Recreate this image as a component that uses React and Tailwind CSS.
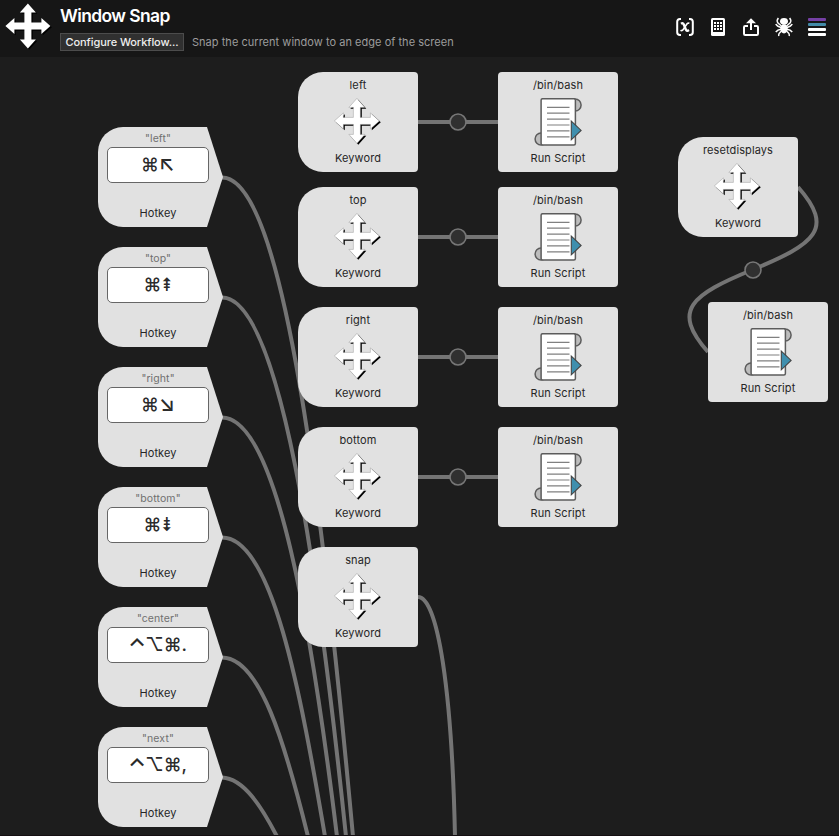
import React from "react";

const ARROWS =
  "M22.5 0 L30.5 9 L26 9 L26 19 L36 19 L36 14.5 L45 22.5 L36 30.5 L36 26 L26 26 L26 36 L30.5 36 L22.5 45 L14.5 36 L19 36 L19 26 L9 26 L9 30.5 L0 22.5 L9 14.5 L9 19 L19 19 L19 9 L14.5 9 Z";

function MoveIcon({ className, outlined }) {
  return (
    <svg className={className} viewBox="0 0 48 48" fill="none">
      <path d={ARROWS} transform="translate(1.8 1.8)" fill="#000" />
      <path
        d={ARROWS}
        transform="translate(0.4 0.4)"
        fill="#fff"
        stroke={outlined ? "#8a8a8a" : "none"}
        strokeWidth="0.4"
      />
    </svg>
  );
}

function ScriptIcon() {
  return (
    <svg className="h-12 w-12" viewBox="0 0 48 48" fill="none">
      <g stroke="#5c5c5c" strokeWidth="1.5">
        <circle cx="41.2" cy="7" r="5.9" fill="#bdbdbd" />
        <circle cx="7" cy="41" r="5.9" fill="#bdbdbd" />
        <rect x="7.1" y="0.7" width="34.3" height="46.2" rx="1.5" fill="#fff" />
      </g>
      <path
        d="M13 9.3H35.5M13 15.2H35.5M13 21.1H35.5M13 27H35.5M13 32.9H35.5M13 38.8H35.5"
        stroke="#808080"
        strokeWidth="1.2"
      />
      <path d="M37.3 23.1L47.1 32.4L37.3 41.8Z" fill="#3f8fae" stroke="#444" strokeWidth="1.1" />
    </svg>
  );
}

function Keyword({ title, className }) {
  return (
    <div
      className={`absolute flex h-[100px] w-[120px] flex-col items-center rounded-l-[25px] rounded-r-[4px] bg-[#e1e1e1] pt-[6px] text-[11px] leading-[14px] tracking-[0.1px] text-[#262626] ${className}`}
    >
      <span>{title}</span>
      <MoveIcon outlined className="mt-[6px] h-[48px] w-[48px]" />
      <span className="mt-[5px]">Keyword</span>
    </div>
  );
}

function RunScript({ className }) {
  return (
    <div
      className={`absolute flex h-[100px] w-[120px] flex-col items-center rounded-[4px] bg-[#e1e1e1] pt-[6px] text-[11px] leading-[14px] tracking-[0.1px] text-[#262626] ${className}`}
    >
      <span>/bin/bash</span>
      <div className="mt-[6px] mr-px">
        <ScriptIcon />
      </div>
      <span className="mt-[5px]">Run Script</span>
    </div>
  );
}

function Hotkey({ title, keys, arrow, control, className }) {
  return (
    <div className={`absolute h-[100px] w-[125px] ${className}`}>
      <div className="flex h-full flex-col items-start rounded-l-[25px] bg-[#e1e1e1] pt-[5px] text-[11px] leading-[14px] tracking-[0.1px] text-[#262626] [clip-path:polygon(0_0,109px_0,125px_50%,109px_100%,0_100%)]">
        <span className="w-[120px] text-center text-[10.5px] text-[#707070]">&quot;{title}&quot;</span>
        <div className="mt-px ml-[9px] flex h-[36px] w-[102px] items-center justify-center rounded-[5px] border border-[#666] bg-white text-[18px] leading-none font-medium tracking-normal text-[#2b2b2b]">
          {control && <span className="mt-[4px] -mr-px -ml-px text-[23px]">⌃</span>}
          <span>{keys}</span>
          {arrow && <span className="mb-[3px] text-[21px]">{arrow}</span>}
        </div>
        <span className="mt-[23px] w-[120px] text-center">Hotkey</span>
      </div>
    </div>
  );
}

const hotkeys = [
  { title: "left", keys: "⌘", arrow: "↖", className: "left-[98px] top-[127px]" },
  { title: "top", keys: "⌘⇞", className: "left-[98px] top-[247px]" },
  { title: "right", keys: "⌘", arrow: "↘", className: "left-[98px] top-[367px]" },
  { title: "bottom", keys: "⌘⇟", className: "left-[98px] top-[487px]" },
  { title: "center", control: true, keys: "⌥⌘.", className: "left-[98px] top-[607px]" },
  { title: "next", control: true, keys: "⌥⌘,", className: "left-[98px] top-[727px]" },
];

const keywords = [
  { title: "left", className: "left-[298px] top-[72px]" },
  { title: "top", className: "left-[298px] top-[187px]" },
  { title: "right", className: "left-[298px] top-[307px]" },
  { title: "bottom", className: "left-[298px] top-[427px]" },
  { title: "snap", className: "left-[298px] top-[547px]" },
  { title: "resetdisplays", className: "left-[678px] top-[137px]" },
];

const scripts = [
  "left-[498px] top-[72px]",
  "left-[498px] top-[187px]",
  "left-[498px] top-[307px]",
  "left-[498px] top-[427px]",
  "left-[708px] top-[302px]",
];

const wires = [
  "M222 177.5c62 0 101 330 131 659",
  "M222 297.5c58 0 96 270 124 539",
  "M222 417.5c55 0 90 214 115 419",
  "M222 537.5c50 0 78 152 103 299",
  "M222 657.5c38 0 63 86 86 179",
  "M222 777.5c22 1 40 30 55 59",
  "M418 597c20 0 34 95 37 240",
  "M418 122H498",
  "M418 237H498",
  "M418 357H498",
  "M418 477H498",
  "M798 187C835 229 815 244 753 269.5C691 295 671 310 708 352",
];

const joints = [
  [458, 122],
  [458, 237],
  [458, 357],
  [458, 477],
  [753, 270],
];

function HeaderIcons() {
  return (
    <div className="absolute top-[17px] left-[675px] flex items-center gap-[13px]">
      <svg className="h-5 w-5" viewBox="0 0 20 20" fill="none" stroke="#fff" strokeWidth="2">
        <path d="M6 2H5Q2.2 2 2.2 4.8V15.2Q2.2 18 5 18H6M14 2H15Q17.8 2 17.8 4.8V15.2Q17.8 18 15 18H14" />
        <path d="M6 6.8Q8.2 5.3 8.9 7.8L10.8 12.4Q11.6 14.7 14 13" strokeWidth="2.4" />
        <path d="M14.4 6.4Q12.8 5.4 11.2 8L8.6 12Q7.2 14.4 5.4 13.4" strokeWidth="1.6" />
      </svg>
      <svg className="h-5 w-5" viewBox="0 0 20 20">
        <rect x="3" y="1" width="14" height="18" rx="1.6" fill="#fff" />
        <rect x="5" y="3" width="10" height="12" fill="#161616" />
        <path
          d="M6 5h2v2h-2zM9 5h2v2h-2zM12 5h2v2h-2zM6 8h2v2h-2zM9 8h2v2h-2zM12 8h2v2h-2zM6 11h2v2h-2zM9 11h2v2h-2zM12 11h2v2h-2z"
          fill="#fff"
        />
      </svg>
      <svg className="h-5 w-5" viewBox="0 0 20 20" fill="none" stroke="#fff" strokeWidth="2">
        <path d="M7 9H4.2Q3 9 3 10.2V16.8Q3 18 4.2 18H15.8Q17 18 17 16.8V10.2Q17 9 15.8 9H13M10 13V5" />
        <path d="M10 1.2L15 6.2H5Z" fill="#fff" stroke="none" />
      </svg>
      <svg className="h-5 w-5" viewBox="0 0 20 20" fill="none" stroke="#fff" strokeWidth="1.5">
        <ellipse cx="10" cy="4.3" rx="4" ry="3.4" fill="#fff" stroke="none" />
        <ellipse cx="10" cy="11.8" rx="3.7" ry="4.6" fill="#fff" stroke="none" />
        <path d="M4.4 1Q2.2 3.5 4 6L7.5 9M15.6 1Q17.8 3.5 16 6L12.5 9M1.8 7Q3 9.6 7 10.4M18.2 7Q17 9.6 13 10.4M1.8 15Q3.5 12.6 7 12.2M18.2 15Q16.5 12.6 13 12.2M4.8 19Q4.2 16.5 7.5 14M15.2 19Q15.8 16.5 12.5 14" />
      </svg>
      <svg className="h-5 w-5" viewBox="0 0 20 20">
        <rect x="1" y="1" width="18" height="3" rx="1" fill="#7540a5" />
        <rect x="1" y="6" width="18" height="3" rx="1" fill="#438ba8" />
        <rect x="1" y="11" width="18" height="3" rx="1" fill="#fff" />
        <rect x="1" y="16" width="18" height="3" rx="1" fill="#fff" />
      </svg>
    </div>
  );
}

export default function App() {
  return (
    <div className="relative h-[836px] w-[839px] overflow-hidden border-b border-[#150f12] bg-[#1d1d1d] font-[Inter,'DejaVu_Sans',sans-serif]">
      <header className="flex h-[57px] bg-[#161616]">
        <MoveIcon className="mt-[3px] ml-[5px] h-[48px] w-[48px] shrink-0" />
        <div className="ml-[7px] flex flex-col pt-[5px]">
          <h1 className="text-[17.5px] leading-[22px] font-semibold tracking-[-0.62px] text-white">Window Snap</h1>
          <div className="mt-[6px] flex items-center">
            <button className="h-[18px] w-[124px] border border-[#4c4c4c] bg-[#303030] text-[11px] leading-[15px] font-medium tracking-[-0.08px] whitespace-nowrap text-[#eee]">
              Configure Workflow...
            </button>
            <span className="ml-2 text-[11px] leading-[15px] tracking-[0.03px] whitespace-nowrap text-[#9c9c9c]">
              Snap the current window to an edge of the screen
            </span>
          </div>
        </div>
      </header>
      <HeaderIcons />
      <svg className="absolute inset-0" width="839" height="836" fill="none">
        {wires.map((d) => (
          <path key={d} d={d} stroke="#747474" strokeWidth="4" />
        ))}
        {joints.map(([x, y]) => (
          <circle key={`${x}-${y}`} cx={x} cy={y} r="8" fill="#303030" stroke="#777" strokeWidth="1.6" />
        ))}
      </svg>
      {hotkeys.map((h) => (
        <Hotkey key={h.title} {...h} />
      ))}
      {keywords.map((k) => (
        <Keyword key={k.title} {...k} />
      ))}
      {scripts.map((s) => (
        <RunScript key={s} className={s} />
      ))}
    </div>
  );
}
